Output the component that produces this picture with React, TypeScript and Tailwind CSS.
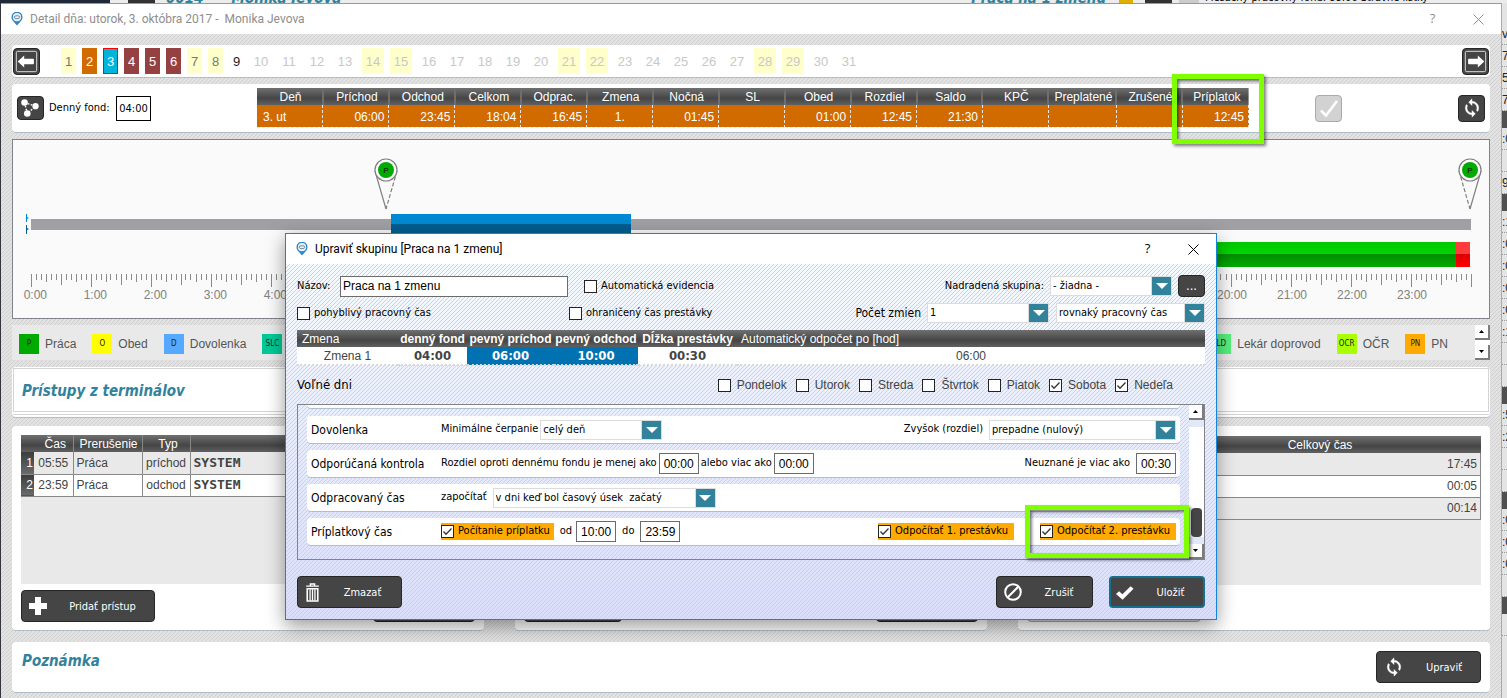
import { useState } from "react";
import type { ReactNode } from "react";
import clsx from "clsx";

const PANEL = "bg-white rounded border-b border-[#b0bec9]";
const DARK_HEAD = "bg-[linear-gradient(#707070,#454545_60%,#606060)]";
const STRIPES =
  "bg-[linear-gradient(135deg,transparent_44%,#d0d0d0_44%,#d0d0d0_56%,transparent_56%)] bg-[length:4px_4px]";

const days = Array.from({ length: 31 }, (_, i) => i + 1);
const weekend = [1, 7, 8, 14, 15, 21, 22, 28, 29];

const summary = [
  { head: "Deň", value: "3. ut", align: "text-left pl-[6px]" },
  { head: "Príchod", value: "06:00" },
  { head: "Odchod", value: "23:45" },
  { head: "Celkom", value: "18:04" },
  { head: "Odprac.", value: "16:45" },
  { head: "Zmena", value: "1.", align: "text-center" },
  { head: "Nočná", value: "01:45" },
  { head: "SL", value: "" },
  { head: "Obed", value: "01:00" },
  { head: "Rozdiel", value: "12:45" },
  { head: "Saldo", value: "21:30" },
  { head: "KPČ", value: "" },
  { head: "Preplatené", value: "" },
  { head: "Zrušené", value: "" },
  { head: "Príplatok", value: "12:45" },
];

const legendLeft = [
  { code: "P", name: "Práca", color: "bg-[#00aa00]" },
  { code: "O", name: "Obed", color: "bg-[#ffff00]" },
  { code: "D", name: "Dovolenka", color: "bg-[#55aaff]" },
  { code: "SLC", name: "SLC", color: "bg-[#00c896]" },
];

const legendRight = [
  { code: "LD", name: "Lekár doprovod", color: "bg-[#55f07d]" },
  { code: "OCR", name: "OČR", color: "bg-[#aaff00]" },
  { code: "PN", name: "PN", color: "bg-[#ffaa00]" },
];

const accesses = [
  { time: "05:55", name: "Práca", type: "príchod" },
  { time: "23:59", name: "Práca", type: "odchod" },
];

const freeDays = ["Pondelok", "Utorok", "Streda", "Štvrtok", "Piatok", "Sobota", "Nedeľa"];

function PinLogo() {
  return (
    <svg viewBox="0 0 12 14" className="w-3 h-[14px]">
      <path d="M6 13.5 1.6 8.4a5.5 5.5 0 1 1 8.8 0z" fill="#2f86c9" />
      <circle cx="6" cy="5.2" r="4.1" fill="#e8f2fa" />
      <ellipse cx="6" cy="5.2" rx="2.8" ry="1.5" fill="none" stroke="#6b7f90" strokeWidth=".9" />
    </svg>
  );
}

function ArrowIcon({ flip }: { flip?: boolean }) {
  return (
    <svg viewBox="0 0 27 27" className={clsx("w-full h-full", flip && "-scale-x-100")}>
      <rect x="2.5" y="2.5" width="22" height="22" rx="1.5" fill="none" stroke="#e6e6e6" />
      <path d="M4 13.5l7-6.500v3.500h9.500q1 0 1 1v4q0 1-1 1H11V20z" fill="#fff" />
    </svg>
  );
}

function RefreshIcon() {
  return (
    <svg viewBox="0 0 24 24" className="w-5 h-5" fill="#fff">
      <path d="M12 4V1L8 5l4 4V6c3.310 0 6 2.690 6 6 0 1.010-.25 1.970-.7 2.800l1.460 1.460A7.930 7.930 0 0 0 20 12c0-4.420-3.580-8-8-8zm0 14c-3.310 0-6-2.690-6-6 0-1.010.25-1.970.7-2.800L5.240 7.740A7.930 7.930 0 0 0 4 12c0 4.420 3.580 8 8 8v3l4-4-4-4v3z" stroke="#fff" strokeWidth=".5" />
    </svg>
  );
}

function CheckMark({ className }: { className: string }) {
  return (
    <svg viewBox="0 0 20 20" className={className} fill="currentColor">
      <path d="M1 11.500 4.300 8.600 7.800 11.800 16.500 3.500 19.500 6 8 17.500z" />
    </svg>
  );
}

function DarkButton({ icon, className, children }: { icon?: ReactNode; className?: string; children?: ReactNode }) {
  return (
    <button
      type="button"
      className={clsx(
        "h-8 flex items-center rounded-sm bg-[#454545] text-white text-[11px] pl-[7px] pr-2 border",
        className
      )}
    >
      {icon}
      <span className="flex-1 text-center pl-3 pt-[2px]">{children}</span>
    </button>
  );
}

function Tick({ label, on, className, gap = "gap-1" }: { label: string; on?: boolean; className?: string; gap?: string }) {
  const [checked, setChecked] = useState(!!on);
  return (
    <label className={clsx("inline-flex items-center whitespace-nowrap", gap, className)}>
      <span className="relative w-[13px] h-[13px] shrink-0">
        <input
          type="checkbox"
          checked={checked}
          onChange={(e) => setChecked(e.target.checked)}
          className="appearance-none block w-[13px] h-[13px] bg-white border border-[#222]"
        />
        {checked && (
          <svg viewBox="0 0 13 13" className="absolute inset-0 pointer-events-none">
            <path d="M2.500 6.500 5 9.200l5.500-5.700" fill="none" stroke="#333" strokeWidth="1.300" />
          </svg>
        )}
      </span>
      {label}
    </label>
  );
}

function Select({ value, label, className }: { value: string; label: string; className: string }) {
  return (
    <span className={clsx("relative inline-block h-5 bg-white border border-[#dcdcdc]", className)}>
      <select aria-label={label} className="appearance-none block w-full h-full pl-[2px] pr-5 pt-px bg-transparent outline-none">
        <option>{value}</option>
      </select>
      <span className="absolute right-0 top-0 bottom-0 w-5 bg-[#32829b] border-l border-[#dcdcdc] flex items-center justify-center pointer-events-none">
        <svg viewBox="0 0 12 6" className="w-3 h-[6px]">
          <path d="M0 0h12L6 6z" fill="#fff" />
        </svg>
      </span>
    </span>
  );
}

function TimeInput({ value, label }: { value: string; label: string }) {
  return (
    <input
      aria-label={label}
      defaultValue={value}
      className="w-10 h-[21px] bg-white border border-[#6b6b6b] text-center text-[12px] font-['Liberation_Sans',sans-serif]"
    />
  );
}

function ScrollButton({ down }: { down?: boolean }) {
  return (
    <button
      type="button"
      aria-label={down ? "Nadol" : "Nahor"}
      className="w-[15px] h-[15px] bg-white border-r-2 border-b-2 border-[#7d7d7d] flex items-center justify-center"
    >
      <svg viewBox="0 0 5 3" className="w-[5px] h-[3px]">
        <path d={down ? "M0 0h5L2.500 3z" : "M0 3h5L2.500 0z"} fill="#000" />
      </svg>
    </button>
  );
}

function LegendItem({ code, name, color }: { code: string; name: string; color: string }) {
  return (
    <li className="flex items-center gap-[6px]">
      <span className={clsx("w-5 h-5 flex items-center justify-center text-[8px] text-[#222] font-['DejaVu_Sans_Condensed',sans-serif]", color)}>
        {code}
      </span>
      {name}
    </li>
  );
}

const pct = (minutes: number) => `${(minutes / 1440) * 100}%`;

function Marker({ minutes, mirrored }: { minutes: number; mirrored?: boolean }) {
  return (
    <svg x={pct(minutes)} overflow="visible">
      <path d="M-11 31 0 69" fill="none" stroke="#808080" strokeWidth="1.200" strokeDasharray={mirrored ? "4 2" : undefined} />
      <path d="M11 31 0 69" fill="none" stroke="#808080" strokeWidth="1.200" strokeDasharray={mirrored ? undefined : "4 2"} />
      <circle cx="0" cy="30" r="11" fill="#fff" stroke="#808080" strokeWidth="1.200" />
      <circle cx="0" cy="30" r="8" fill="#00aa00" />
      <text x="0" y="33" textAnchor="middle" fontSize="8" fill="#111">P</text>
    </svg>
  );
}

function Timeline() {
  const ticks = Array.from({ length: 289 }, (_, i) => i * 5);
  const tickEnd = (m: number) => (m % 60 === 0 ? 147 : m % 30 === 0 ? 145 : m % 15 === 0 ? 142 : 140);
  return (
    <div className="mt-[6px] border border-[#82828a] bg-[#fafafa] px-[18px]">
      <svg className="block w-full h-[178px] overflow-visible font-['Liberation_Sans',sans-serif]">
        <defs>
          <linearGradient id="green" x1="0" y1="0" x2="0" y2="1">
            <stop offset="0" stopColor="#00c800" />
            <stop offset=".48" stopColor="#00d600" />
            <stop offset=".48" stopColor="#008c00" />
            <stop offset="1" stopColor="#00ac00" />
          </linearGradient>
          <linearGradient id="red" x1="0" y1="0" x2="0" y2="1">
            <stop offset=".48" stopColor="#ff3c3c" />
            <stop offset=".48" stopColor="#dc0000" />
            <stop offset="1" stopColor="#ff0000" />
          </linearGradient>
        </defs>
        <path d="M-5 74h1v3l2 1-2 1v3h-1z" fill="#0089d2" />
        <path d="M-5 85h1v3l2 1-2 1v4h-1z" fill="#005e90" />
        <rect x="0" y="79" width="100%" height="11" fill="#a09fa4" />
        <rect x={pct(360)} y="74" width={pct(240)} height="10" fill="#0089d2" />
        <rect x={pct(360)} y="84" width={pct(240)} height="10" fill="#005e90" />
        <rect x={pct(360)} y="102" width={pct(1065)} height="25" fill="url(#green)" />
        <rect x={pct(1425)} y="102" width={pct(14)} height="25" fill="url(#red)" />
        {ticks.map((m) => (
          <line key={m} x1={pct(m)} x2={pct(m)} y1="134" y2={tickEnd(m)} stroke="#8a8a8a" shapeRendering="crispEdges" />
        ))}
        {ticks
          .filter((m) => m % 60 === 0 && m < 1440)
          .map((m) => (
            <svg key={m} x={pct(m)} overflow="visible">
              <text x="16" y="159" textAnchor="end" fontSize="12" fill="#808080">
                {m / 60}:00
              </text>
            </svg>
          ))}
        <Marker minutes={355} />
        <Marker minutes={1439} mirrored />
      </svg>
    </div>
  );
}

function OptionRow({ title, children }: { title: string; children: ReactNode }) {
  return (
    <div className={clsx(PANEL, "h-7 flex items-center pl-1 pr-1")}>
      <h3 className="w-[130px] shrink-0 text-[12px] whitespace-nowrap">{title}</h3>
      {children}
    </div>
  );
}

function EditGroupDialog() {
  return (
    <div
      role="dialog"
      aria-label="Upraviť skupinu"
      className="w-[932px] self-start border border-[#1883d7] bg-[#e6ecf8] text-black text-[11px] shadow-[0_6px_18px_rgba(0,0,0,0.4)]"
    >
      <div className="h-[30px] bg-white flex items-center pl-[10px]">
        <PinLogo />
        <h2 className="ml-[7px] text-[12px] font-[Roboto,sans-serif]">Upraviť skupinu [Praca na 1 zmenu]</h2>
        <button type="button" className="ml-auto w-[45px] text-[13px] font-['Open_Sans',sans-serif]">?</button>
        <button type="button" aria-label="Zavrieť" className="w-[46px] flex justify-center">
          <svg viewBox="0 0 11 11" className="w-[11px] h-[11px]">
            <path d="M.5.5l10 10M10.500.5l-10 10" stroke="#000" />
          </svg>
        </button>
      </div>

      <div className="bg-[linear-gradient(135deg,transparent_44%,#c9d3e0_44%,#c9d3e0_56%,transparent_56%),linear-gradient(#f5faff,#dadefa)] bg-[length:4px_4px,100%_100%] px-[11px] pt-[10px] pb-[11px]">
        <div className="flex items-center h-6">
          <label htmlFor="group" className="w-[43px]">Názov:</label>
          <input
            id="group"
            defaultValue="Praca na 1 zmenu"
            className="w-[228px] h-[21px] pl-[2px] bg-white border border-[#6b6b6b] text-[12px] font-['Liberation_Sans',sans-serif]"
          />
          <Tick label="Automatická evidencia" className="ml-4" />
          <span className="ml-auto mr-[6px]">Nadradená skupina:</span>
          <Select label="Nadradená skupina" value="- žiadna -" className="w-[122px]" />
          <button type="button" className="ml-[6px] w-[27px] h-[22px] rounded-sm bg-[#454545] border border-[#262626] text-white text-[13px] leading-4">
            ...
          </button>
        </div>
        <div className="flex items-center h-6 mt-[3px]">
          <Tick label="pohyblivý pracovný čas" className="w-[272px]" />
          <Tick label="ohraničený čas prestávky" />
          <span className="ml-auto mr-[6px] text-[12px]">Počet zmien</span>
          <Select label="Počet zmien" value="1" className="w-[122px]" />
          <Select label="Pracovný čas" value="rovnaký pracovný čas" className="ml-[7px] w-[149px]" />
        </div>

        <table className="mt-[5px] w-full table-fixed border-collapse text-[12px] leading-4 font-['Liberation_Sans',sans-serif]">
          <thead>
            <tr className={clsx(DARK_HEAD, "h-[17px] text-white whitespace-nowrap")}>
              <th className="w-[101px] p-0 pl-[5px] text-left font-normal">Zmena</th>
              <th className="w-[69px] p-0">denný fond</th>
              <th className="w-[87px] p-0">pevný príchod</th>
              <th className="w-[84px] p-0">pevný odchod</th>
              <th className="w-[99px] p-0">Dĺžka prestávky</th>
              <th className="p-0 pl-1 text-left font-normal">Automatický odpočet po [hod]</th>
            </tr>
          </thead>
          <tbody>
            <tr className="h-[18px] bg-white text-[#444] text-center border-b-2 border-dotted border-[#d8d8d8]">
              <td className="p-0">Zmena 1</td>
              <td className="p-0 font-bold text-[13px] font-['DejaVu_Sans_Condensed',sans-serif]">04:00</td>
              <td className="p-0 font-bold text-[13px] font-['DejaVu_Sans_Condensed',sans-serif] bg-[#0072b1] text-white">06:00</td>
              <td className="p-0 font-bold text-[13px] font-['DejaVu_Sans_Condensed',sans-serif] bg-[#0072b1] text-white">10:00</td>
              <td className="p-0 font-bold text-[13px] font-['DejaVu_Sans_Condensed',sans-serif]">00:30</td>
              <td className="p-0">06:00</td>
            </tr>
          </tbody>
        </table>

        <div className="flex items-center h-[38px] pr-8">
          <span className="text-[13px]">Voľné dni</span>
          <div className="ml-auto flex gap-[9px] text-[12px] text-[#444] font-['Liberation_Sans',sans-serif]">
            {freeDays.map((day, i) => (
              <Tick key={day} label={day} on={i > 4} gap="gap-[6px]" />
            ))}
          </div>
        </div>

        <div className="h-[156px] border border-[#82828a] flex">
          <div className="flex-1 pl-[9px] pr-[9px]">
            <div className="h-1 bg-white rounded-b border-b border-[#b0bec9] mb-[7px]" />
            <div className="flex flex-col gap-[6px]">
              <OptionRow title="Dovolenka">
                <span className="mr-[2px]">Minimálne čerpanie</span>
                <Select label="Minimálne čerpanie" value="celý deň" className="w-[122px]" />
                <span className="ml-auto mr-[6px]">Zvyšok (rozdiel)</span>
                <Select label="Zvyšok" value="prepadne (nulový)" className="w-[187px]" />
              </OptionRow>
              <OptionRow title="Odporúčaná kontrola">
                <span className="mr-[2px]">Rozdiel oproti dennému fondu je menej ako</span>
                <TimeInput label="Menej ako" value="00:00" />
                <span className="mx-[2px]">alebo viac ako</span>
                <TimeInput label="Viac ako" value="00:00" />
                <span className="ml-auto mr-[6px]">Neuznané je viac ako</span>
                <TimeInput label="Neuznané" value="00:30" />
              </OptionRow>
              <OptionRow title="Odpracovaný čas">
                <span className="mr-[6px]">započítať</span>
                <Select label="Započítať" value={"v dni keď bol časový úsek \u00a0začatý"} className="w-[223px]" />
              </OptionRow>
              <OptionRow title="Príplatkový čas">
                <Tick on label="Počítanie príplatku" className="bg-[#ffaa00] h-[17px] pr-1" />
                <span className="ml-[6px] mr-1">od</span>
                <TimeInput label="Od" value="10:00" />
                <span className="mx-[6px]">do</span>
                <TimeInput label="Do" value="23:59" />
                <Tick on label="Odpočítať 1. prestávku" className="ml-auto mr-[26px] bg-[#ffaa00] h-[17px] pr-[6px]" />
                <span className="relative flex">
                  <Tick on label="Odpočítať 2. prestávku" className="bg-[#ffaa00] h-[17px] pr-[6px]" />
                  <span className="absolute -left-[15px] -right-[13px] -top-[18px] -bottom-[18px] border-[5px] border-[#80ff00] shadow-[2px_2px_3px_rgba(0,0,0,0.5),inset_2px_2px_3px_rgba(0,0,0,0.5)] pointer-events-none" />
                </span>
              </OptionRow>
            </div>
          </div>
          <div className="w-[15px] flex flex-col bg-white">
            <ScrollButton />
            <div className="h-[7px] bg-[#e2e8f8]" />
            <div className="mt-auto mx-[2px] h-[29px] rounded bg-[#454545]" />
            <div className="h-[7px] bg-[#e2e8f8]" />
            <ScrollButton down />
          </div>
        </div>

        <div className="mt-4 flex">
          <DarkButton
            className="w-[105px] border-[#262626]"
            icon={
              <svg viewBox="0 0 14 18" className="w-[15px] h-[19px]" fill="none" stroke="#fff">
                <path d="M1 3h12M5 2.500V1h4v1.500" strokeWidth="1.300" />
                <path d="M2 5.500h10V17H2z" strokeWidth="1.500" />
                <path d="M4.700 6v10.500M7 6v10.500M9.300 6v10.500" strokeWidth="1.200" />
              </svg>
            }
          >
            Zmazať
          </DarkButton>
          <DarkButton
            className="ml-auto w-[97px] border-[#262626]"
            icon={
              <svg viewBox="0 0 18 18" className="w-[18px] h-[18px]" fill="none" stroke="#fff" strokeWidth="2">
                <circle cx="9" cy="9" r="7.800" />
                <path d="M3.500 14.500l11-11" />
              </svg>
            }
          >
            Zrušiť
          </DarkButton>
          <DarkButton
            className="ml-4 w-24 border-2! border-[#14708f] pl-1!"
            icon={<CheckMark className="w-[19px] h-[19px] text-white" />}
          >
            Uložiť
          </DarkButton>
        </div>
      </div>
    </div>
  );
}

function DayPanels() {
  return (
    <>
      <nav className={clsx(PANEL, "flex items-center h-[33px] px-px")}>
        <button type="button" aria-label="Predchádzajúci deň" className="w-[27px] h-[27px] rounded-sm bg-[#454545] border border-[#262626]">
          <ArrowIcon />
        </button>
        <div className="ml-[21px] flex gap-[6px] text-[13px]">
          {days.map((d) => (
            <button
              type="button"
              key={d}
              className={clsx(
                "h-[26px] text-center pt-px",
                d < 10 ? "w-[15px]" : "w-[22px]",
                weekend.includes(d) && "bg-[#ffffcc]",
                d === 2 && "bg-[#d16b00] text-white",
                d === 3 && "bg-[#00b4dc] text-white border border-[#ff0000]",
                d >= 4 && d <= 6 && "bg-[#964141] text-white",
                [1, 7, 8].includes(d) && "text-[#777]",
                d === 9 && "text-[#222]",
                d > 9 && "text-[#c8c8c8]"
              )}
            >
              {d}
            </button>
          ))}
        </div>
        <button type="button" aria-label="Nasledujúci deň" className="ml-auto w-[27px] h-[27px] rounded-sm bg-[#454545] border border-[#262626]">
          <ArrowIcon flip />
        </button>
      </nav>

      <section className={clsx(PANEL, "mt-[6px] h-[49px] flex items-center px-[5px]")}>
        <div className="w-60 shrink-0 flex items-center text-[11px] text-black font-['DejaVu_Sans_Condensed',sans-serif]">
          <button type="button" aria-label="Väzby" className="w-[27px] h-6 rounded-sm bg-[#454545] border border-[#262626]">
            <svg viewBox="0 0 27 24" className="w-full h-full" fill="#fff">
              <path d="M7 6l3 12 9-8z" fill="none" stroke="#fff" strokeWidth="1.500" strokeDasharray="2 1.500" />
              <circle cx="7" cy="6" r="3.600" />
              <circle cx="19" cy="10" r="3.400" />
              <circle cx="10" cy="18" r="3.600" />
            </svg>
          </button>
          <label htmlFor="fund" className="ml-[5px] w-[67px] whitespace-nowrap">Denný fond:</label>
          <input id="fund" defaultValue="04:00" className="w-[35px] h-[25px] border border-black text-center text-[11px]" />
        </div>
        <div className="relative shrink-0">
          <table className="w-[992px] table-fixed border-collapse text-[12px] leading-4">
            <thead>
              <tr className={clsx(DARK_HEAD, "h-[17px] text-white")}>
                {summary.map((c) => (
                  <th
                    key={c.head}
                    className={clsx("p-0 pl-[2px] font-normal border-r-2 border-[#6e6e6e] last:border-r-0", c.head === "Preplatené" && "w-[68px]")}
                  >
                    {c.head}
                  </th>
                ))}
              </tr>
            </thead>
            <tbody>
              <tr className="h-[22px] bg-[#d16b00] text-white">
                {summary.map((c) => (
                  <td key={c.head} className={clsx("p-0 pt-px border-r border-dashed border-b border-[#e8e8e8]", c.align ?? "text-right pr-1")}>
                    {c.value}
                  </td>
                ))}
              </tr>
            </tbody>
          </table>
          <span className="absolute w-[92px] -right-[15px] -top-[14px] -bottom-[16px] border-[5px] border-[#80ff00] shadow-[2px_2px_3px_rgba(0,0,0,0.5),inset_2px_2px_3px_rgba(0,0,0,0.5)] pointer-events-none" />
        </div>
        <button type="button" disabled aria-label="Schváliť" className="ml-[66px] w-[27px] h-[27px] rounded-sm bg-[#d2d2d2] border border-[#aaa] flex items-center justify-center">
          <svg viewBox="0 0 20 20" className="w-5 h-5">
            <path d="M2 12.500 7 17.500 18 3" fill="none" stroke="#fff" strokeWidth="2.600" />
          </svg>
        </button>
        <button type="button" aria-label="Obnoviť" className="ml-auto w-[27px] h-[27px] rounded-sm bg-[#454545] border border-[#262626] flex items-center justify-center">
          <RefreshIcon />
        </button>
      </section>

      <Timeline />

      <section className="mt-[6px] h-[35px] bg-[#e9e9e9] flex items-center justify-between text-[12px] text-[#555]">
        <ul className="flex gap-4 ml-[7px] pt-[2px]">
          {legendLeft.map((l) => (
            <LegendItem key={l.code} {...l} />
          ))}
        </ul>
        <ul className="ml-auto mr-[27px] pt-[2px] flex gap-4">
          {legendRight.map((l) => (
            <LegendItem key={l.code} {...l} />
          ))}
        </ul>
        <div className="h-full flex flex-col justify-between bg-white">
          <ScrollButton />
          <ScrollButton down />
        </div>
      </section>

      <section className="mt-[7px] h-[51px] rounded bg-white border-b border-[#b0bec9] p-px pb-[5px]">
        <div className="h-full border border-[#d4d4d4] shadow-[0_2px_0_#fff,0_3px_0_#d4d4d4] flex items-center pl-2">
          <h2 className="pt-[2px] text-[15px] font-bold italic text-[#32829b] font-['DejaVu_Sans_Condensed',sans-serif]">
            Prístupy z terminálov
          </h2>
        </div>
      </section>
    </>
  );
}

function AccessTables() {
  return (
    <section className="mt-2 grid grid-cols-3 gap-[31px] text-[12px] text-[#444]">
      <div className={clsx(PANEL, "h-[205px] p-[9px] pb-2 flex flex-col")}>
        <div className="h-[149px] bg-[#e9e9e9]">
          <table className="w-full table-fixed border-collapse leading-4">
            <thead>
              <tr className={clsx(DARK_HEAD, "h-[17px] text-white")}>
                <th className="w-[13px] p-0" />
                <th className="w-[39px] p-0 pl-1 font-normal border-r border-[#888]">Čas</th>
                <th className="w-[69px] p-0 pl-[2px] font-normal border-r border-[#888]">Prerušenie</th>
                <th className="w-12 p-0 pl-1 font-normal border-r border-[#888]">Typ</th>
                <th className="p-0" />
              </tr>
            </thead>
            <tbody>
              {accesses.map((a, i) => (
                <tr key={a.time} className={clsx("h-[22px] border-b border-[#888]", i % 2 ? "bg-white" : "bg-[#e9e9e9]")}>
                  <th className="p-0 bg-[linear-gradient(#3c3c3c,#6b6b6b)] text-white font-normal text-right pr-px">{i + 1}</th>
                  <td className="p-0 text-center border-r border-[#888]">{a.time}</td>
                  <td className="p-0 pl-[3px] border-r border-[#888]">{a.name}</td>
                  <td className="p-0 text-center border-r border-[#888]">{a.type}</td>
                  <td className="p-0 pl-[3px] text-[13px] font-bold font-['DejaVu_Sans_Mono',monospace]">SYSTEM</td>
                </tr>
              ))}
            </tbody>
          </table>
        </div>
        <div className="mt-auto flex justify-between font-['DejaVu_Sans_Condensed',sans-serif]">
          <DarkButton
            className="w-[134px] border-[#262626]"
            icon={
              <svg viewBox="0 0 18 18" className="w-[18px] h-[18px]">
                <path d="M6 0h6v6h6v6h-6v6H6v-6H0V6h6z" fill="#fff" />
              </svg>
            }
          >
            Pridať prístup
          </DarkButton>
          <DarkButton className="w-[102px] border-[#262626]" />
        </div>
      </div>

      <div className={clsx(PANEL, "h-[205px] p-[9px] pb-2 flex items-end justify-between")}>
        <DarkButton className="w-[98px] border-[#262626]" />
        <DarkButton className="w-[102px] border-[#262626]" />
      </div>

      <div className={clsx(PANEL, "h-[205px] p-[9px] pt-[10px] pb-2 flex flex-col")}>
        <div className="h-[149px] bg-[#e9e9e9]">
          <table className="w-full table-fixed border-collapse leading-4">
            <thead>
              <tr className={clsx(DARK_HEAD, "h-[17px] text-white")}>
                <th className="p-0" />
                <th className="w-[321px] p-0 font-normal">Celkový čas</th>
              </tr>
            </thead>
            <tbody>
              {["17:45", "00:05", "00:14"].map((t, i) => (
                <tr key={t} className={clsx("h-[22px] border-b border-r border-[#888]", i % 2 ? "bg-white" : "bg-[#e9e9e9]")}>
                  <td className="p-0" />
                  <td className="p-0 pr-[3px] text-right">{t}</td>
                </tr>
              ))}
            </tbody>
          </table>
        </div>
        <button type="button" disabled aria-label="Export" className="mt-auto w-[174px] h-8 rounded-sm bg-[#d2d2d2] border border-[#aaa]" />
      </div>
    </section>
  );
}

// slices of the attendance window that stay visible right of this one
const behindRight = [
  ["v", "7", "5", "7"],
  [":0", "", "9:"],
  [":1", ":0", ":0", ":0", ":0", ":1", "", ""],
  [":5", ":2", "", ""],
  [":0", ":0", ":0", ""],
  [""],
];

export default function App() {
  return (
    <div className="min-h-screen flex flex-col bg-[#ececec] overflow-hidden font-['Liberation_Sans',sans-serif]">
      <div className="h-[3px] flex overflow-hidden text-[15px] font-bold italic leading-none text-[#32829b] font-['DejaVu_Sans_Condensed',sans-serif]">
        <div className="w-[110px] bg-[#1f2937]" />
        <div className="ml-[18px] w-[27px] bg-[#333]" />
        <span className="ml-[11px] -mt-[9px]">0014</span>
        <span className="ml-7 -mt-[9px]">Monika Jevova</span>
        <span className="ml-auto -mt-[9px]">Praca na 1 zmenu</span>
        <div className="ml-[13px] w-[14px] bg-[#e0b000]" />
        <div className="ml-3 w-[27px] bg-[#333]" />
        <div className="ml-[7px] mr-[6px] w-5 bg-[#ccc]" />
        <span className="-mt-[8px] w-[302px] text-[11px] font-normal not-italic text-black whitespace-nowrap">
          Mesačný pracovný fond: 88:00 Stravné lístky
        </span>
      </div>

      <div className="flex-1 flex">
        <div className="w-px bg-[#33363f]" />
        <main className="relative flex-1 min-w-0 border-t border-[#999] bg-[#e2e2e2]">
          <header className="h-[30px] bg-white flex items-center pl-[10px] text-[#8e8e8e]">
            <PinLogo />
            <h1 className="ml-[7px] text-[12px] font-[Roboto,sans-serif]">Detail dňa: utorok, 3. októbra 2017 - &nbsp;Monika Jevova</h1>
            <button type="button" className="ml-auto w-[45px] text-[13px] font-['Open_Sans',sans-serif]">?</button>
            <button type="button" aria-label="Zavrieť okno" className="w-[46px] flex justify-center">
              <svg viewBox="0 0 11 11" className="w-[11px] h-[11px]">
                <path d="M.5.5l10 10M10.500.5l-10 10" stroke="#8e8e8e" />
              </svg>
            </button>
          </header>
          <div className={clsx(STRIPES, "px-[11px] pt-[11px] pb-[6px]")}>
            <DayPanels />
            <AccessTables />
            <section className={clsx(PANEL, "mt-[11px] h-[51px] flex items-center justify-between pl-[10px] pr-[9px]")}>
              <h2 className="mb-3 text-[15px] font-bold italic text-[#32829b] font-['DejaVu_Sans_Condensed',sans-serif]">
                Poznámka
              </h2>
              <div className="font-['DejaVu_Sans_Condensed',sans-serif]">
                <DarkButton className="w-[105px] border-[#262626]" icon={<RefreshIcon />}>
                  Upraviť
                </DarkButton>
              </div>
            </section>
          </div>
          <div className="absolute inset-0 pt-[229px] flex justify-center font-['DejaVu_Sans_Condensed',sans-serif]">
            <EditGroupDialog />
          </div>
        </main>
        <div className="w-[6px] shrink-0 overflow-hidden border-l border-[#aaa] bg-[#e4e4e4] pt-5 text-[12px] leading-[22px] text-[#222]">
          {behindRight.map((group, i) => (
            <div key={i}>
              {i > 0 && <div className="h-[17px] bg-[#505050]" />}
              {group.map((t, j) => (
                <div key={j} className="h-[22px] border-b border-dotted border-[#999]">
                  {t}
                </div>
              ))}
            </div>
          ))}
        </div>
      </div>
    </div>
  );
}
